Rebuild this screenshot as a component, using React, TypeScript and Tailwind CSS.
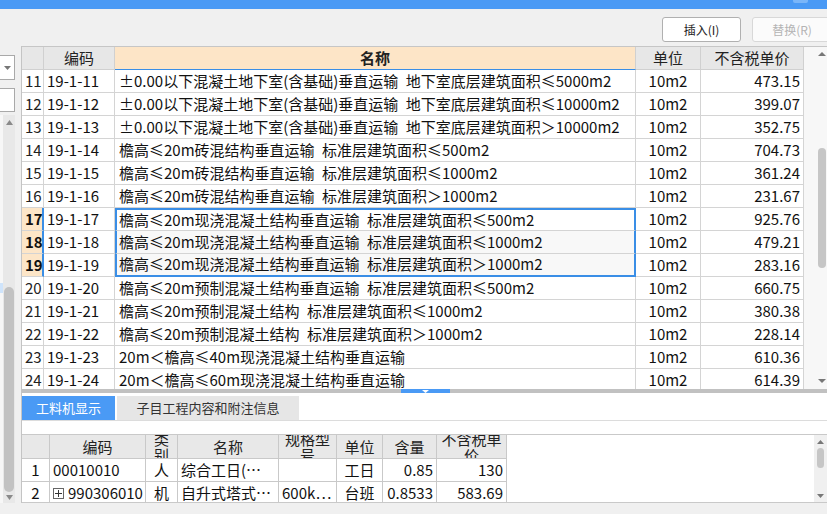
import React from "react";

const FONT = "font-['Noto_Sans_CJK_SC',sans-serif]";

// 定额列表
const mainRows: [string, string, string, string][] = [
  ["11", "19-1-11", "±0.00以下混凝土地下室(含基础)垂直运输 地下室底层建筑面积≤5000m2", "473.15"],
  ["12", "19-1-12", "±0.00以下混凝土地下室(含基础)垂直运输 地下室底层建筑面积≤10000m2", "399.07"],
  ["13", "19-1-13", "±0.00以下混凝土地下室(含基础)垂直运输 地下室底层建筑面积＞10000m2", "352.75"],
  ["14", "19-1-14", "檐高≤20m砖混结构垂直运输 标准层建筑面积≤500m2", "704.73"],
  ["15", "19-1-15", "檐高≤20m砖混结构垂直运输 标准层建筑面积≤1000m2", "361.24"],
  ["16", "19-1-16", "檐高≤20m砖混结构垂直运输 标准层建筑面积＞1000m2", "231.67"],
  ["17", "19-1-17", "檐高≤20m现浇混凝土结构垂直运输 标准层建筑面积≤500m2", "925.76"],
  ["18", "19-1-18", "檐高≤20m现浇混凝土结构垂直运输 标准层建筑面积≤1000m2", "479.21"],
  ["19", "19-1-19", "檐高≤20m现浇混凝土结构垂直运输 标准层建筑面积＞1000m2", "283.16"],
  ["20", "19-1-20", "檐高≤20m预制混凝土结构垂直运输 标准层建筑面积≤500m2", "660.75"],
  ["21", "19-1-21", "檐高≤20m预制混凝土结构 标准层建筑面积≤1000m2", "380.38"],
  ["22", "19-1-22", "檐高≤20m预制混凝土结构 标准层建筑面积＞1000m2", "228.14"],
  ["23", "19-1-23", "20m＜檐高≤40m现浇混凝土结构垂直运输", "610.36"],
  ["24", "19-1-24", "20m＜檐高≤60m现浇混凝土结构垂直运输", "614.39"],
];

function Tri({ dir, fill = "#6b6b6b", w = 8, h = 4 }: { dir: "up" | "down"; fill?: string; w?: number; h?: number }) {
  return (
    <svg width={w} height={h} viewBox={`0 0 ${w} ${h}`} className="block shrink-0">
      <path d={dir === "up" ? `M0 ${h} L${w / 2} 0 L${w} ${h}Z` : `M0 0 L${w} 0 L${w / 2} ${h}Z`} fill={fill} />
    </svg>
  );
}

function MainTable() {
  return (
    <div className="w-[782px] flex flex-col overflow-hidden bg-white text-[15px] text-[#111]">
      {/* ヘッダー */}
      <div className="flex h-[23px] shrink-0 bg-[#e7e7e7] text-[#222]">
        <div className="w-[22px] border-r border-b border-[#d0d0d0]" />
        <div className="w-[71px] border-r border-b border-[#d0d0d0] flex items-center justify-center">编码</div>
        <div className="w-[521px] border-r border-r-[#d0d0d0] border-b border-b-[#3a8ee6] bg-[#fde5c7] font-bold flex items-center justify-center">名称</div>
        <div className="w-[65px] border-r border-b border-[#d0d0d0] flex items-center justify-center">单位</div>
        <div className="w-[103px] border-r border-b border-[#d0d0d0] flex items-center justify-center">不含税单价</div>
      </div>

      {mainRows.map(([n, code, name, price]) => {
        const sel = n === "17" || n === "18" || n === "19";
        let nameCls = "w-[521px] flex items-center overflow-hidden whitespace-nowrap ";
        if (n === "17") nameCls += "pl-[2px] border-x-2 border-t-2 border-x-[#3a8ee6] border-t-[#3a8ee6] border-b border-b-[#d4d4d4]";
        else if (n === "18") nameCls += "pl-[2px] border-x-2 border-x-[#3a8ee6] border-b border-b-[#d4d4d4] bg-[#f8f8f8]";
        else if (n === "19") nameCls += "pl-[2px] border-x-2 border-b-2 border-[#3a8ee6] bg-[#f8f8f8]";
        else nameCls += "pl-[4px] border-r border-b border-[#d4d4d4]";
        return (
          <div key={n} className="flex h-[23px] shrink-0">
            <div
              className={
                sel
                  ? "w-[22px] pl-[3px] flex items-center bg-[#fde6c8] font-bold border-r-2 border-r-[#3a8ee6] border-b border-b-[#d4d4d4]"
                  : "w-[22px] pl-[3px] flex items-center border-r border-b border-[#d4d4d4] text-[#222]"
              }
            >
              {n}
            </div>
            <div className="w-[71px] pl-[3px] flex items-center border-r border-b border-[#d4d4d4]">{code}</div>
            <div className={nameCls}>{name.replace(/ /g, "\u2002")}</div>
            <div className="w-[65px] flex items-center justify-center border-r border-b border-[#d4d4d4]">10m2</div>
            <div className="w-[103px] pr-[3px] flex items-center justify-end border-r border-b border-[#d4d4d4]">{price}</div>
          </div>
        );
      })}
    </div>
  );
}

function BottomTable() {
  const hd = "border-r border-b border-[#c9c9c9] flex items-center justify-center text-center overflow-hidden px-[2px] leading-[16px]";
  const td = "border-r border-b border-[#c9c9c9] flex items-center overflow-hidden whitespace-nowrap";
  return (
    <div className="w-[485px] flex flex-col text-[15px] text-[#111]">
      <div className="flex h-[24px] shrink-0 bg-[#e8e8e8] text-[#222]">
        <div className={`w-[28px] ${hd}`} />
        <div className={`w-[96px] ${hd}`}>编码</div>
        <div className={`w-[32px] ${hd}`}>类别</div>
        <div className={`w-[101px] ${hd}`}>名称</div>
        <div className={`w-[58px] ${hd}`}>规格型号</div>
        <div className={`w-[46px] ${hd}`}>单位</div>
        <div className={`w-[54px] ${hd}`}>含量</div>
        <div className={`w-[70px] ${hd}`}>不含税单价</div>
      </div>
      <div className="flex h-[23px] shrink-0">
        <div className={`w-[28px] justify-center ${td}`}>1</div>
        <div className={`w-[96px] pl-[3px] ${td}`}>00010010</div>
        <div className={`w-[32px] justify-center ${td}`}>人</div>
        <div className={`w-[101px] pl-[3px] ${td}`}>综合工日(…</div>
        <div className={`w-[58px] ${td}`} />
        <div className={`w-[46px] justify-center ${td}`}>工日</div>
        <div className={`w-[54px] justify-end pr-[3px] ${td}`}>0.85</div>
        <div className={`w-[70px] justify-end pr-[3px] ${td}`}>130</div>
      </div>
      <div className="flex h-[23px] shrink-0">
        <div className={`w-[28px] justify-center ${td}`}>2</div>
        <div className={`w-[96px] pl-[3px] gap-[4px] ${td}`}>
          <span className="w-[11px] h-[11px] border border-[#666] flex items-center justify-center shrink-0">
            <svg width="9" height="9" viewBox="0 0 9 9" className="block">
              <path d="M1 4.5 H8 M4.5 1 V8" stroke="#333" strokeWidth="1" />
            </svg>
          </span>
          990306010
        </div>
        <div className={`w-[32px] justify-center ${td}`}>机</div>
        <div className={`w-[101px] pl-[3px] ${td}`}>自升式塔式…</div>
        <div className={`w-[58px] pl-[3px] ${td}`}>600k…</div>
        <div className={`w-[46px] justify-center ${td}`}>台班</div>
        <div className={`w-[54px] justify-end pr-[3px] ${td}`}>0.8533</div>
        <div className={`w-[70px] justify-end pr-[3px] ${td}`}>583.69</div>
      </div>
    </div>
  );
}

export default function App() {
  return (
    <div className={`w-[827px] h-[514px] overflow-hidden flex flex-col bg-[#f0f0f0] ${FONT}`}>
      {/* タイトルバー */}
      <div className="h-[9px] shrink-0 bg-[#4a9af5] flex justify-end">
        <div className="w-[15px] h-[3px] mr-[19px] bg-[#7ab6f9] rounded-b-[2px]" />
      </div>

      {/* ツールバー */}
      <div className="h-[37px] shrink-0 flex items-start pt-[8px] pl-[662px] gap-[11px] text-[12px]">
        <button className="w-[79px] h-[25px] shrink-0 bg-white border border-[#b0b0b0] rounded-[3px] text-[#222] flex items-center justify-center">
          插入(I)
        </button>
        <button className="w-[80px] h-[25px] shrink-0 bg-[#fbfbfb] border border-[#d8d8d8] rounded-[3px] text-[#b4b4b4] flex items-center justify-center">
          替换(R)
        </button>
      </div>

      <div className="h-[457px] shrink-0 flex">
        {/* 左パネル */}
        <div className="w-[21px] shrink-0 flex flex-col">
          <div className="mt-[9px] w-[15px] h-[25px] bg-white border border-l-0 border-[#a9a9a9] flex items-center justify-center">
            <Tri dir="down" w={7} h={4} fill="#777" />
          </div>
          <div className="mt-[8px] w-[15px] h-[24px] bg-white border border-l-0 border-[#a9a9a9]" />
          <div className="mt-[3px] w-[15px] flex-1 flex">
            <div className="w-[3px] bg-[#f7f7f7] flex flex-col">
              <div className="mt-[168px] h-[10px] bg-[#cfe4fb]" />
            </div>
            <div className="w-[12px] bg-[#e8e8e8] flex flex-col items-center pt-[5px] pb-[3px]">
              <Tri dir="up" w={7} h={5} fill="#8a8a8a" />
              <div className="flex-1" />
              <div className="w-[10px] h-[205px] rounded-full bg-[#c2c2c2]" />
              <div className="mt-[3px]">
                <Tri dir="down" w={7} h={5} fill="#8a8a8a" />
              </div>
            </div>
          </div>
        </div>

        {/* メイン */}
        <div className="w-[806px] shrink-0 border-l border-[#c4c4c4] flex flex-col">
          <div className="h-[343px] shrink-0 flex border-t border-[#c6c6c6]">
            <MainTable />
            <div className="w-[23px] bg-[#f7f7f7] flex flex-col items-end pr-[1px] pt-[5px] pb-[6px]">
              <Tri dir="up" fill="#777" />
              <div className="mt-[92px] w-[8px] h-[120px] rounded-full bg-[#c6c6c6]" />
              <div className="flex-1" />
              <Tri dir="down" fill="#777" />
            </div>
          </div>

          {/* 分割バー */}
          <div className="h-[4px] shrink-0 bg-[#c1c1c1] flex">
            <div className="ml-[379px] w-[49px] bg-[#4a9af5] flex justify-center pt-[1px]">
              <Tri dir="down" w={7} h={3} fill="#fff" />
            </div>
          </div>

          {/* 下部パネル */}
          <div className="h-[110px] shrink-0 bg-white flex flex-col">
            <div className="mt-[3px] h-[25px] shrink-0 flex gap-[2px] border-b border-[#dcdcdc] text-[13px]">
              <div className="w-[93px] h-[24px] bg-[#4a9af5] text-white flex items-center justify-center">工料机显示</div>
              <div className="w-[182px] h-[24px] bg-[#e6e6e6] text-[#333] flex items-center justify-center">子目工程内容和附注信息</div>
            </div>
            <div className="h-[13px] shrink-0" />
            <div className="h-[69px] shrink-0 flex border-t border-b border-[#c9c9c9] overflow-hidden">
              <BottomTable />
              <div className="flex-1" />
              <div className="w-[13px] bg-[#f0f0f0] flex flex-col items-center pt-[5px] pb-[4px]">
                <Tri dir="up" w={7} h={4} fill="#777" />
                <div className="mt-[4px] w-[7px] h-[20px] rounded-full bg-[#c6c6c6]" />
                <div className="flex-1" />
                <Tri dir="down" w={7} h={4} fill="#777" />
              </div>
            </div>
          </div>
        </div>
      </div>

      {/* ステータス */}
      <div className="h-[11px] shrink-0 bg-[#f0f0f0]" />
    </div>
  );
}
